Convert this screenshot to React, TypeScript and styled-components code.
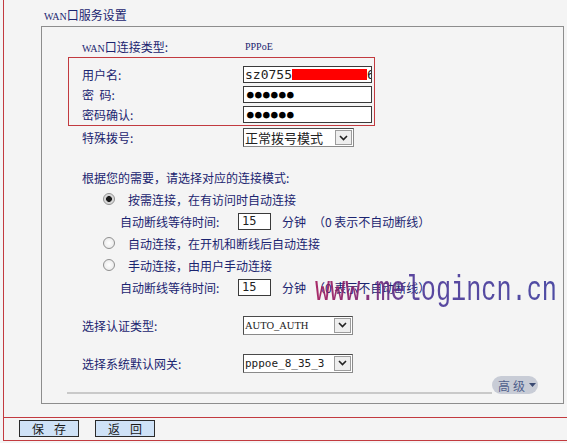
import React from "react";
import styled, { createGlobalStyle } from "styled-components";

const NAVY = "#1b2470";
const RED = "#c23a3f";
const CJK = `"Noto Sans CJK SC", "Liberation Sans", sans-serif`;

const Global = createGlobalStyle`
  html, body { margin: 0; padding: 0; background: #f4f4f4; }
  body { font-family: ${CJK}; font-size: 12px; color: ${NAVY}; }
`;

const Frame = styled.div`
  position: relative;
  margin-left: 3px;
  width: 564px;
  box-sizing: border-box;
  border-left: 1px solid ${RED};
`;

const Title = styled.div`
  height: 26px;
  box-sizing: border-box;
  padding: 8px 0 0 40px;
  line-height: 14px;
  font-size: 12px;
`;

const Latin = styled.span<{ $size?: number }>`
  font-family: "Liberation Serif", serif;
  font-size: ${(p) => p.$size ?? 10}px;
`;

const Panel = styled.section`
  margin-left: 37px;
  width: 523px;
  height: 378px;
  box-sizing: border-box;
  border: 1px solid #8d8d8d;
  padding: 9px 25px 0 26px;
  display: flex;
  flex-direction: column;
`;

const Row = styled.div<{ $h?: number; $mt?: number; $pl?: number }>`
  display: flex;
  align-items: center;
  height: ${(p) => p.$h ?? 22}px;
  margin-top: ${(p) => p.$mt ?? 0}px;
  padding-left: ${(p) => p.$pl ?? 14}px;
  white-space: nowrap;
`;

const Label = styled.span<{ $w?: number }>`
  width: ${(p) => p.$w ?? 161}px;
  flex: none;
`;

const Group = styled.div`
  margin-top: 1px;
  width: 307px;
  box-sizing: border-box;
  border: 1px solid ${RED};
  padding: 8px 0 2px;
  display: flex;
  flex-direction: column;
  gap: 3px;
`;

const GroupRow = styled.div`
  display: flex;
  align-items: center;
  height: 17px;
  padding-left: 13px;
`;

const TextBox = styled.div`
  width: 129px;
  height: 17px;
  box-sizing: border-box;
  border: 1px solid #3a3a3a;
  background: #fff;
  display: flex;
  align-items: center;
  padding-left: 1px;
  overflow: hidden;
  white-space: nowrap;
  font-family: "DejaVu Sans Mono", monospace;
  font-size: 13px;
  color: #222;
`;

const Dots = styled.span`
  font-family: "DejaVu Sans Mono", monospace;
  font-size: 11px;
  letter-spacing: 1.4px;
  color: #000;
  padding-left: 2px;
`;

const Mask = styled.span`
  display: inline-block;
  width: 75px;
  height: 11px;
  background: #ff0000;
  flex: none;
`;

const Select = styled.div<{ $w?: number }>`
  display: flex;
  width: ${(p) => p.$w ?? 110}px;
  height: 19px;
  box-sizing: border-box;
  border: 1px solid #8a8a8a;
  border-top-color: #4a4a4a;
  border-left-color: #4a4a4a;
  background: #fff;
`;

const SelectText = styled.span<{ $font?: string; $size?: number }>`
  flex: 1;
  display: flex;
  align-items: center;
  padding-left: 1px;
  font-family: ${(p) => p.$font ?? CJK};
  font-size: ${(p) => p.$size ?? 13}px;
  color: #222;
  overflow: hidden;
  white-space: nowrap;
`;

const ArrowBox = styled.span`
  width: 17px;
  margin: 1px;
  box-sizing: border-box;
  border: 1px solid #9c9c9c;
  background: #eeeeee;
  display: flex;
  align-items: center;
  justify-content: center;
`;

const Chevron = () => (
  <svg width="9" height="6" viewBox="0 0 9 6">
    <polyline points="1,1 4.5,4.5 8,1" fill="none" stroke="#222" strokeWidth="1.6" />
  </svg>
);

const Radio = styled.input.attrs({ type: "radio" })`
  appearance: none;
  -webkit-appearance: none;
  margin: 0;
  width: 12px;
  height: 12px;
  box-sizing: border-box;
  border-radius: 50%;
  border: 1px solid #8f8f8f;
  background: radial-gradient(circle, #ffffff 0%, #e4e4e4 100%);
  flex: none;
  &:checked {
    background: radial-gradient(circle, #1a1a1a 0 2.6px, #cfcfcf 3.2px, #f3f3f3 100%);
  }
`;

const RadioRow = styled.label`
  display: flex;
  align-items: center;
  gap: 13px;
  height: 22px;
  padding-left: 35px;
  white-space: nowrap;
`;

const NumBox = styled.div`
  width: 33px;
  height: 17px;
  box-sizing: border-box;
  border: 1px solid #3a3a3a;
  background: #fff;
  display: flex;
  align-items: center;
  padding-left: 3px;
  font-family: "DejaVu Sans Mono", monospace;
  font-size: 12px;
  color: #222;
`;

const Unit = styled.span<{ $ml: number }>`
  margin-left: ${(p) => p.$ml}px;
`;

const AdvancedRow = styled.div`
  display: flex;
  align-items: flex-end;
  margin: 2px 0 0 -1px;
  height: 18px;
`;

const Rule = styled.div`
  flex: 1;
  height: 2px;
  background: #c9c9c9;
`;

const AdvancedButton = styled.button`
  width: 46px;
  height: 18px;
  flex: none;
  border: none;
  border-radius: 9px;
  background: #c8ccd6;
  color: #4f5f8c;
  font-family: ${CJK};
  font-size: 12px;
  padding: 0 0 0 6px;
  display: flex;
  align-items: center;
  gap: 1px;
  letter-spacing: 3px;
  white-space: nowrap;
  cursor: pointer;
`;

const Caret = () => (
  <svg width="7" height="4" viewBox="0 0 7 4" style={{ flex: "none" }}>
    <polygon points="0,0 7,0 3.5,4" fill="#3a4a72" />
  </svg>
);

const Footer = styled.footer`
  margin-top: 13px;
  border-top: 1px solid ${RED};
  border-bottom: 1px solid ${RED};
  padding: 2px 0 3px 15px;
  display: flex;
  gap: 16px;
`;

const Button = styled.button`
  width: 60px;
  height: 17px;
  box-sizing: border-box;
  border: 1px solid #2a2a2a;
  background: #cfe2f7;
  color: #1a1a1a;
  font-family: ${CJK};
  font-size: 12px;
  line-height: 15px;
  padding: 0;
  letter-spacing: 10px;
  text-indent: 10px;
  white-space: nowrap;
  cursor: pointer;
`;

const Watermark = styled.div`
  position: absolute;
  left: 311px;
  top: 271px;
  font-family: "Liberation Mono", monospace;
  font-size: 35px;
  line-height: 40px;
  transform: scaleX(0.72);
  transform-origin: left top;
  white-space: nowrap;
  pointer-events: none;
  opacity: 0.9;
  background: linear-gradient(90deg, #a0165a 0%, #7a2070 22%, #4b3596 40%, #3d3a9c 100%);
  -webkit-background-clip: text;
  background-clip: text;
  color: transparent;
`;

export default function App() {
  return (
    <>
      <Global />
      <Frame>
        <Title>
          <Latin $size={10}>WAN</Latin>口服务设置
        </Title>
        <Panel>
          <Row $h={20}>
            <Label>
              <Latin $size={10}>WAN</Latin>口连接类型:
            </Label>
            <Latin $size={10} style={{ paddingLeft: 2 }}>PPPoE</Latin>
          </Row>
          <Group>
            <GroupRow>
              <Label>用户名:</Label>
              <TextBox>
                sz0755<Mask />6
              </TextBox>
            </GroupRow>
            <GroupRow>
              <Label>密&nbsp;&nbsp;码:</Label>
              <TextBox>
                <Dots>●●●●●●</Dots>
              </TextBox>
            </GroupRow>
            <GroupRow>
              <Label>密码确认:</Label>
              <TextBox>
                <Dots>●●●●●●</Dots>
              </TextBox>
            </GroupRow>
          </Group>
          <Row $h={21} $mt={1}>
            <Label>特殊拨号:</Label>
            <Select $w={111}>
              <SelectText $size={13}>正常拨号模式</SelectText>
              <ArrowBox>
                <Chevron />
              </ArrowBox>
            </Select>
          </Row>
          <Row $mt={18}>根据您的需要，请选择对应的连接模式:</Row>
          <RadioRow>
            <Radio name="mode" defaultChecked />
            按需连接，在有访问时自动连接
          </RadioRow>
          <Row $pl={52}>
            <Label $w={118}>自动断线等待时间:</Label>
            <NumBox>15</NumBox>
            <Unit $ml={11}>分钟</Unit>
            <Unit $ml={7}>（0 表示不自动断线）</Unit>
          </Row>
          <RadioRow>
            <Radio name="mode" />
            自动连接，在开机和断线后自动连接
          </RadioRow>
          <RadioRow>
            <Radio name="mode" />
            手动连接，由用户手动连接
          </RadioRow>
          <Row $pl={52}>
            <Label $w={118}>自动断线等待时间:</Label>
            <NumBox>15</NumBox>
            <Unit $ml={11}>分钟</Unit>
            <Unit $ml={7}>（0 表示不自动断线）</Unit>
          </Row>
          <Row $mt={16}>
            <Label>选择认证类型:</Label>
            <Select>
              <SelectText $font={`"Liberation Serif", serif`} $size={10.5}>
                AUTO_AUTH
              </SelectText>
              <ArrowBox>
                <Chevron />
              </ArrowBox>
            </Select>
          </Row>
          <Row $mt={16}>
            <Label>选择系统默认网关:</Label>
            <Select>
              <SelectText $font={`"DejaVu Sans Mono", monospace`} $size={11}>
                pppoe_8_35_3
              </SelectText>
              <ArrowBox>
                <Chevron />
              </ArrowBox>
            </Select>
          </Row>
          <AdvancedRow>
            <Rule />
            <AdvancedButton>
              高级
              <Caret />
            </AdvancedButton>
          </AdvancedRow>
        </Panel>
        <Footer>
          <Button>保存</Button>
          <Button>返回</Button>
        </Footer>
        <Watermark>www.melogincn.cn</Watermark>
      </Frame>
    </>
  );
}
